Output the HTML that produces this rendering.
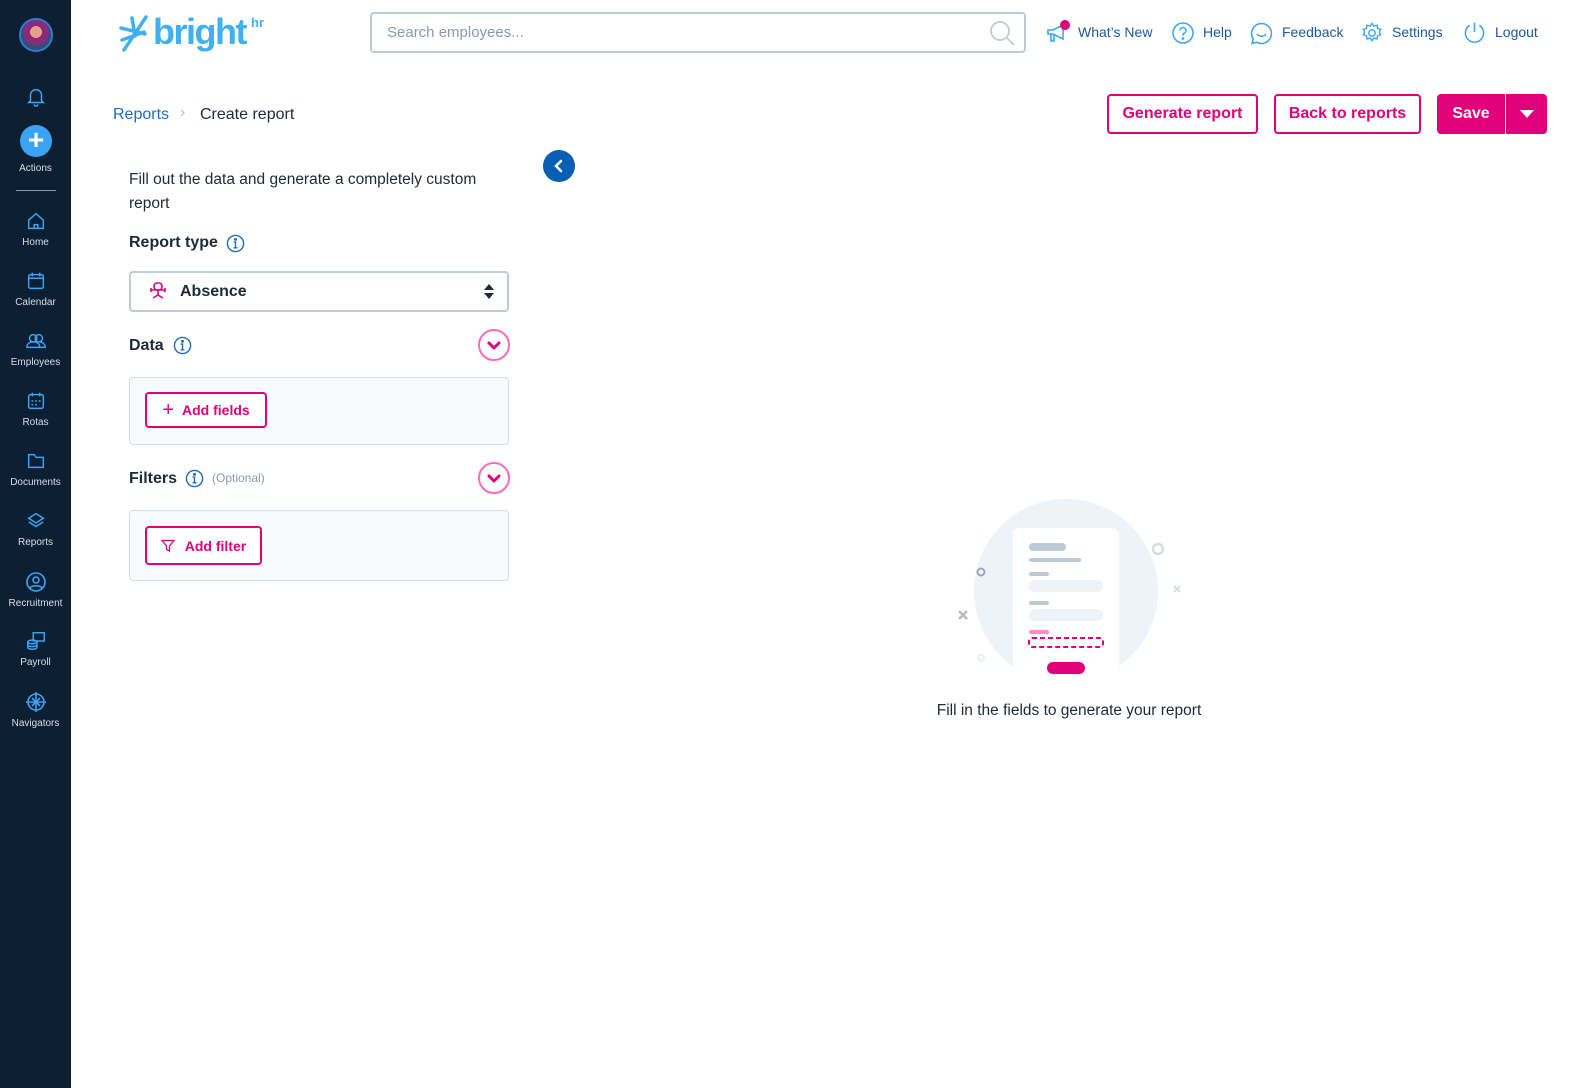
<!DOCTYPE html>
<html><head><meta charset="utf-8">
<style>
*{box-sizing:border-box;margin:0;padding:0}
html,body{width:1587px;height:1088px;overflow:hidden;background:#fff;font-family:"Liberation Sans",sans-serif;color:#1c2b39}
.side{position:absolute;left:0;top:0;width:71px;height:1088px;background:#0d2033}
.si{position:absolute;left:0;width:71px;text-align:center;color:#d8dee6;font-size:10px}
.si svg{display:block;margin:0 auto}
.abs{position:absolute}
.nav{position:absolute;top:24px;font-size:14px;color:#1d5ba0}
.btn{position:absolute;border:2px solid #e2007a;border-radius:4px;color:#e2007a;font-weight:bold;font-size:16px;display:flex;align-items:center;justify-content:center;background:#fff}
.lbl{position:absolute;font-weight:bold;font-size:16px;color:#1c2b39}
.box{position:absolute;left:129px;width:380px;background:#f8fbfd;border:1px solid #d5dde5;border-radius:4px}
.chev{position:absolute;left:478px;width:32px;height:32px;border:2px solid #ff6cb5;border-radius:50%}
</style></head><body>
<div class="side">
  <div class="abs" style="left:19px;top:18px;width:34px;height:34px;border-radius:50%;background:radial-gradient(circle at 50% 40%,#e7a08a 0 25%,#8a2a7a 26% 55%,#3a4a7a 56%);border:2px solid #2a7fd0"></div>
  <div class="si" style="top:86px"><svg width="22" height="22" viewBox="0 0 24 24" fill="none" stroke="#3aa3f5" stroke-width="1.6"><path d="M6 16V10a6 6 0 0 1 12 0v6l2 2H4z M10 20a2 2 0 0 0 4 0"/></svg></div>
  <div class="abs" style="left:20px;top:125px;width:32px;height:32px;border-radius:50%;background:#3aa3f5;color:#fff;font-size:28px;line-height:30px;text-align:center;font-weight:bold">+</div>
  <div class="si" style="top:163px">Actions</div>
  <div class="abs" style="left:16px;top:190px;width:40px;height:1px;background:#8a97a5"></div>
  <div class="si" style="top:210px"><svg width="22" height="22" viewBox="0 0 24 24" fill="none" stroke="#3aa3f5" stroke-width="1.6"><path d="M4 11l8-7 8 7v9H4z M10 20v-4h4v4"/></svg><div style="margin-top:5px">Home</div></div>
  <div class="si" style="top:270px"><svg width="22" height="22" viewBox="0 0 24 24" fill="none" stroke="#3aa3f5" stroke-width="1.6"><rect x="4" y="5" width="16" height="15" rx="2"/><path d="M4 9h16M8 3v4M16 3v4"/></svg><div style="margin-top:5px">Calendar</div></div>
  <div class="si" style="top:330px"><svg width="24" height="22" viewBox="0 0 24 24" fill="none" stroke="#3aa3f5" stroke-width="1.6"><circle cx="9" cy="9" r="4"/><circle cx="15" cy="9" r="4"/><path d="M2 19c0-4 3-6 7-6s7 2 7 6zM13 19h9c0-4-3-6-7-6"/></svg><div style="margin-top:5px">Employees</div></div>
  <div class="si" style="top:390px"><svg width="22" height="22" viewBox="0 0 24 24" fill="none" stroke="#3aa3f5" stroke-width="1.6"><rect x="4" y="5" width="16" height="15" rx="2"/><path d="M8 3v4M16 3v4M7 12h2M11 12h2M15 12h2M7 16h2M11 16h2"/></svg><div style="margin-top:5px">Rotas</div></div>
  <div class="si" style="top:450px"><svg width="22" height="22" viewBox="0 0 24 24" fill="none" stroke="#3aa3f5" stroke-width="1.6"><path d="M4 5h6l2 3h8v11H4z"/></svg><div style="margin-top:5px">Documents</div></div>
  <div class="si" style="top:510px"><svg width="22" height="22" viewBox="0 0 24 24" fill="none" stroke="#3aa3f5" stroke-width="1.6"><path d="M12 4l8 5-8 5-8-5z M4 13l8 5 8-5"/></svg><div style="margin-top:5px">Reports</div></div>
  <div class="si" style="top:570px"><svg width="24" height="24" viewBox="0 0 24 24" fill="none" stroke="#3aa3f5" stroke-width="1.6"><circle cx="12" cy="12" r="9"/><circle cx="12" cy="10" r="3"/><path d="M6 18c2-3 10-3 12 0"/></svg><div style="margin-top:4px">Recruitment</div></div>
  <div class="si" style="top:630px"><svg width="22" height="22" viewBox="0 0 24 24" fill="none" stroke="#3aa3f5" stroke-width="1.6"><rect x="9" y="3" width="12" height="9"/><ellipse cx="8" cy="13" rx="5" ry="2"/><path d="M3 13v6c0 1 2 2 5 2s5-1 5-2v-6M3 16c0 1 2 2 5 2s5-1 5-2"/></svg><div style="margin-top:5px">Payroll</div></div>
  <div class="si" style="top:690px"><svg width="24" height="24" viewBox="0 0 24 24" fill="none" stroke="#3aa3f5" stroke-width="1.6"><circle cx="12" cy="12" r="8"/><path d="M12 2v20M2 12h20M8 8l8 8M16 8l-8 8"/></svg><div style="margin-top:4px">Navigators</div></div>
</div>

<!-- logo -->
<svg class="abs" style="left:118px;top:14px" width="32" height="40" viewBox="0 0 32 40" fill="none" stroke="#3fb0f0" stroke-width="3.5" stroke-linecap="round"><path d="M28 3L6 36M3 14l24 6M4 26l22-8M14 4l3 18"/></svg>
<div class="abs" style="left:153px;top:12px;font-size:36px;font-weight:bold;color:#3fb0f0;letter-spacing:-1.5px;line-height:40px">bright</div>
<div class="abs" style="left:251px;top:15px;font-size:13px;font-weight:bold;color:#3fb0f0">hr</div>

<!-- search -->
<div class="abs" style="left:370px;top:12px;width:656px;height:41px;border:2px solid #bccbd8;border-radius:4px"></div>
<div class="abs" style="left:387px;top:24px;font-size:15px;color:#8a9aab">Search employees...</div>
<svg class="abs" style="left:988px;top:19px" width="28" height="28" viewBox="0 0 28 28" fill="none" stroke="#bccbd8" stroke-width="1.8"><circle cx="12" cy="12" r="9"/><path d="M19 19l7 7"/></svg>

<!-- top nav -->
<svg class="abs" style="left:1046px;top:22px" width="24" height="22" viewBox="0 0 24 22" fill="none" stroke="#3aa3f5" stroke-width="1.6"><path d="M2 8h5l10-5v14L7 12H2z M5 12v7h3v-7"/></svg>
<div class="abs" style="left:1060px;top:20px;width:10px;height:10px;border-radius:50%;background:#e2007a"></div>
<div class="nav" style="left:1078px">What’s New</div>
<svg class="abs" style="left:1172px;top:22px" width="22" height="22" viewBox="0 0 22 22" fill="none" stroke="#3aa3f5" stroke-width="1.5"><circle cx="11" cy="11" r="10"/><path d="M8 8.5a3 3 0 1 1 4 2.8c-.8.4-1 1-1 2v.5"/><circle cx="11" cy="16.5" r=".6" fill="#3aa3f5"/></svg>
<div class="nav" style="left:1203px">Help</div>
<svg class="abs" style="left:1250px;top:22px" width="23" height="23" viewBox="0 0 23 23" fill="none" stroke="#3aa3f5" stroke-width="1.5"><path d="M11.5 1.5a10 10 0 1 1-5 18.7L2 21.5l1.3-4.5A10 10 0 0 1 11.5 1.5z M7 12c2 3 7 3 9 0"/></svg>
<div class="nav" style="left:1282px">Feedback</div>
<svg class="abs" style="left:1361px;top:22px" width="22" height="22" viewBox="0 0 24 24" fill="none" stroke="#3aa3f5" stroke-width="1.5"><circle cx="12" cy="12" r="3.5"/><path d="M12 1.5l2 3 3.5-1 .5 3.5 3.5 1-1.5 3 1.5 3-3.5 1-.5 3.5-3.5-1-2 3-2-3-3.5 1-.5-3.5-3.5-1 1.5-3-1.5-3 3.5-1 .5-3.5 3.5 1z"/></svg>
<div class="nav" style="left:1392px">Settings</div>
<svg class="abs" style="left:1463px;top:21px" width="23" height="23" viewBox="0 0 24 24" fill="none" stroke="#3aa3f5" stroke-width="1.6"><path d="M7 4.5a9.5 9.5 0 1 0 10 0M12 1.5v10"/></svg>
<div class="nav" style="left:1495px">Logout</div>

<!-- breadcrumb -->
<div class="abs" style="left:113px;top:106px;font-size:16px;color:#1d6cc0">Reports</div>
<div class="abs" style="left:180px;top:104px;font-size:16px;color:#b7c2cc">›</div>
<div class="abs" style="left:200px;top:106px;font-size:16px;color:#1c2b39">Create report</div>

<!-- buttons -->
<div class="btn" style="left:1107px;top:94px;width:151px;height:40px">Generate report</div>
<div class="btn" style="left:1274px;top:94px;width:147px;height:40px">Back to reports</div>
<div class="abs" style="left:1437px;top:94px;width:110px;height:40px;background:#e2007a;border-radius:4px"></div>
<div class="abs" style="left:1437px;top:94px;width:68px;height:40px;color:#fff;font-weight:bold;font-size:16px;display:flex;align-items:center;justify-content:center">Save</div>
<div class="abs" style="left:1505px;top:94px;width:1px;height:40px;background:#fff"></div>
<div class="abs" style="left:1520px;top:110px;border-left:7px solid transparent;border-right:7px solid transparent;border-top:8px solid #fff"></div>

<!-- collapse -->
<div class="abs" style="left:543px;top:150px;width:32px;height:32px;border-radius:50%;background:#0a5fb4"></div>
<svg class="abs" style="left:551px;top:158px" width="16" height="16" viewBox="0 0 16 16" fill="none" stroke="#fff" stroke-width="2.5" stroke-linecap="round"><path d="M10 3L5 8l5 5"/></svg>

<!-- left panel -->
<div class="abs" style="left:129px;top:168px;width:380px;font-size:15.5px;line-height:24px;color:#1c2b39">Fill out the data and generate a completely custom report</div>
<div class="lbl" style="left:129px;top:234px">Report type</div>
<svg class="abs" style="left:226px;top:234px" width="19" height="19" viewBox="0 0 20 20" fill="none" stroke="#1d6cc0" stroke-width="1.5"><circle cx="10" cy="10" r="8.5"/><path d="M8 8.5h2v6M8 14.5h4"/><circle cx="10" cy="5.6" r=".8" fill="#1d6cc0"/></svg>
<div class="abs" style="left:129px;top:271px;width:380px;height:41px;border:2px solid #bccbd8;border-radius:4px"></div>
<svg class="abs" style="left:148px;top:281px" width="20" height="20" viewBox="0 0 20 20" fill="none" stroke="#e2007a" stroke-width="1.6"><rect x="6" y="2" width="8" height="7" rx="3"/><path d="M3 9h14M10 9v5M5 17l5-3 5 3M3 7v4M17 7v4"/></svg>
<div class="abs" style="left:180px;top:283px;font-size:16px;font-weight:bold">Absence</div>
<div class="abs" style="left:484px;top:284px;border-left:5px solid transparent;border-right:5px solid transparent;border-bottom:6px solid #1c2b39"></div>
<div class="abs" style="left:484px;top:293px;border-left:5px solid transparent;border-right:5px solid transparent;border-top:6px solid #1c2b39"></div>

<div class="lbl" style="left:129px;top:337px">Data</div>
<svg class="abs" style="left:173px;top:336px" width="19" height="19" viewBox="0 0 20 20" fill="none" stroke="#1d6cc0" stroke-width="1.5"><circle cx="10" cy="10" r="8.5"/><path d="M8 8.5h2v6M8 14.5h4"/><circle cx="10" cy="5.6" r=".8" fill="#1d6cc0"/></svg>
<div class="chev" style="top:329px"><svg width="28" height="28" viewBox="0 0 28 28" fill="none" stroke="#e2007a" stroke-width="3" stroke-linecap="round" stroke-linejoin="round"><path d="M9 12l5 5 5-5"/></svg></div>
<div class="box" style="top:377px;height:68px"></div>
<div class="btn" style="left:145px;top:392px;width:122px;height:36px;font-size:14px"><span style="font-weight:normal;font-size:20px;margin-right:8px;line-height:1">+</span>Add fields</div>

<div class="lbl" style="left:129px;top:470px">Filters</div>
<svg class="abs" style="left:185px;top:469px" width="19" height="19" viewBox="0 0 20 20" fill="none" stroke="#1d6cc0" stroke-width="1.5"><circle cx="10" cy="10" r="8.5"/><path d="M8 8.5h2v6M8 14.5h4"/><circle cx="10" cy="5.6" r=".8" fill="#1d6cc0"/></svg>
<div class="abs" style="left:212px;top:471px;font-size:12px;color:#8a9aab">(Optional)</div>
<div class="chev" style="top:462px"><svg width="28" height="28" viewBox="0 0 28 28" fill="none" stroke="#e2007a" stroke-width="3" stroke-linecap="round" stroke-linejoin="round"><path d="M9 12l5 5 5-5"/></svg></div>
<div class="box" style="top:510px;height:71px"></div>
<div class="btn" style="left:145px;top:526px;width:117px;height:39px;font-size:14px"><svg width="14" height="14" viewBox="0 0 14 14" fill="none" stroke="#e2007a" stroke-width="1.3" style="margin-right:10px"><path d="M1 1.5h12L8.5 7v5l-3-1.5V7z"/></svg>Add filter</div>

<!-- illustration -->
<svg class="abs" style="left:945px;top:495px" width="250" height="190" viewBox="0 0 250 190">
  <circle cx="121" cy="96" r="92" fill="#eef3f8"/>
  <rect x="68" y="33" width="106" height="150" rx="6" fill="#fff"/>
  <rect x="0" y="172" width="250" height="20" fill="#fff"/>
  <rect x="84" y="48" width="37" height="8" rx="4" fill="#bccad6"/>
  <rect x="84" y="63" width="52" height="4" rx="2" fill="#bccad6"/>
  <rect x="84" y="77" width="20" height="4" rx="2" fill="#bccad6"/>
  <rect x="84" y="85" width="74" height="12" rx="6" fill="#eef3f8"/>
  <rect x="84" y="106" width="20" height="4" rx="2" fill="#bccad6"/>
  <rect x="84" y="114" width="74" height="12" rx="6" fill="#eef3f8"/>
  <rect x="84" y="135" width="20" height="4" rx="2" fill="#ff8cc6"/>
  <rect x="84" y="143" width="74" height="9" rx="3" fill="none" stroke="#e2007a" stroke-width="2" stroke-dasharray="5 3"/>
  <rect x="102" y="167" width="38" height="12" rx="6" fill="#e2007a"/>
  <circle cx="36" cy="77" r="3.5" fill="none" stroke="#9aa8b6" stroke-width="2"/>
  <circle cx="213" cy="54" r="5" fill="none" stroke="#d5dde5" stroke-width="2.5"/>
  <circle cx="36" cy="163" r="3" fill="none" stroke="#e5ebf1" stroke-width="1.5"/>
  <path d="M14 116l8 8M22 116l-8 8" stroke="#b0bcc8" stroke-width="2.5"/>
  <path d="M229 91l6 6M235 91l-6 6" stroke="#d5dde5" stroke-width="2"/>
</svg>
<div class="abs" style="left:869px;top:702px;width:400px;text-align:center;font-size:15.5px;color:#1c2b39">Fill in the fields to generate your report</div>
</body></html>
